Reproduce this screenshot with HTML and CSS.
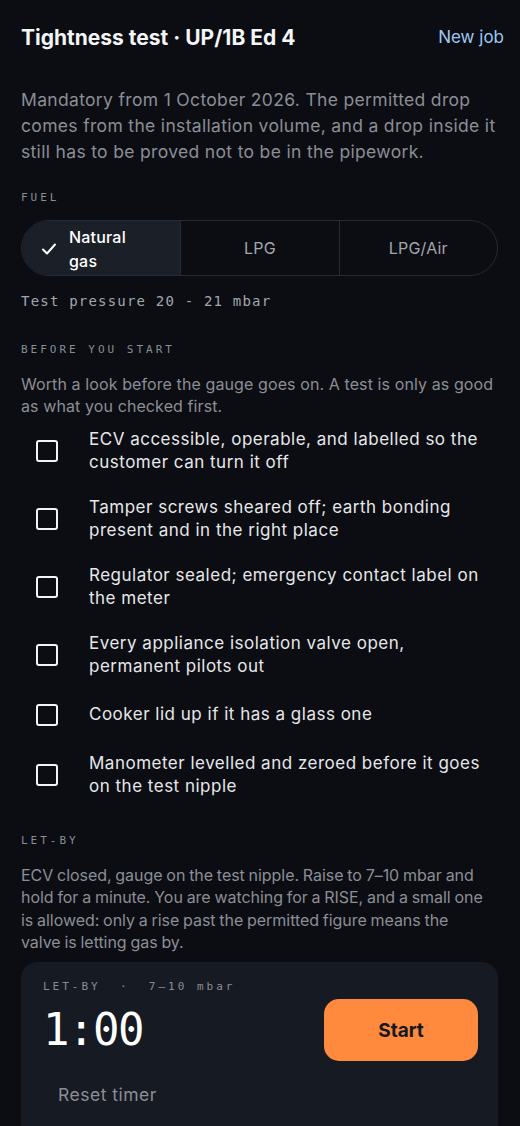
FILE: index.html
```html
<!DOCTYPE html>
<html lang="en">
<head>
<meta charset="utf-8">
<title>Tightness test</title>
<link rel="stylesheet" href="styles.css">
</head>
<body>
<main class="page">
  <header class="top">
    <h1 class="title">Tightness test · UP/1B Ed 4</h1>
    <a class="newjob" href="#">New job</a>
  </header>
  <p class="intro">Mandatory from 1 October 2026. The permitted drop comes from the installation volume, and a drop inside it still has to be proved not to be in the pipework.</p>

  <section class="sect">
    <div class="label">FUEL</div>
    <div class="seg">
      <button class="seg-item sel">
        <svg class="tick" width="18" height="18" viewBox="0 0 18 18"><path d="M3 9.5l4 4 8-9" fill="none" stroke="#fff" stroke-width="2" stroke-linecap="round" stroke-linejoin="round"/></svg>
        <span class="seg-text">Natural gas</span>
      </button>
      <button class="seg-item">LPG</button>
      <button class="seg-item">LPG/Air</button>
    </div>
    <div class="pressure">Test pressure 20 - 21 mbar</div>
  </section>

  <section class="sect">
    <div class="label">BEFORE YOU START</div>
    <p class="note">Worth a look before the gauge goes on. A test is only as good as what you checked first.</p>
    <ul class="checks">
      <li class="check"><span class="box"></span><span class="ctext">ECV accessible, operable, and labelled so the customer can turn it off</span></li>
      <li class="check"><span class="box"></span><span class="ctext">Tamper screws sheared off; earth bonding present and in the right place</span></li>
      <li class="check"><span class="box"></span><span class="ctext">Regulator sealed; emergency contact label on the meter</span></li>
      <li class="check"><span class="box"></span><span class="ctext">Every appliance isolation valve open, permanent pilots out</span></li>
      <li class="check"><span class="box"></span><span class="ctext">Cooker lid up if it has a glass one</span></li>
      <li class="check"><span class="box"></span><span class="ctext">Manometer levelled and zeroed before it goes on the test nipple</span></li>
    </ul>
  </section>

  <section class="sect last">
    <div class="label">LET-BY</div>
    <p class="note tight">ECV closed, gauge on the test nipple. Raise to 7–10 mbar and hold for a minute. You are watching for a RISE, and a small one is allowed: only a rise past the permitted figure means the <span class="keep">valve is letting gas by.</span></p>
    <div class="card">
      <div class="card-label">LET-BY &nbsp;·&nbsp; 7–10 mbar</div>
      <div class="timer-row">
        <div class="timer">1:00</div>
        <button class="start">Start</button>
      </div>
      <button class="reset">Reset timer</button>
    </div>
  </section>
</main>
</body>
</html>
```

FILE: styles.css
```css
* { box-sizing: border-box; }
html, body { margin: 0; padding: 0; }
body {
  background: #0b0d12;
  color: #e8e9ec;
  font-family: Inter, "Noto Sans", sans-serif;
}
.page {
  padding: 22px 22px 0 21px;
}
.top {
  display: flex;
  justify-content: space-between;
  align-items: center;
  height: 30px;
}
.title {
  margin: 0;
  font-size: 21px;
  font-weight: 700;
  letter-spacing: 0;
  color: #f4f5f7;
}
.newjob {
  color: #9fc6f2;
  text-decoration: none;
  font-size: 17px;
  margin-right: -6px;
}
.intro {
  margin: 35px 0 0;
  font-size: 17.5px;
  line-height: 26px;
  letter-spacing: 0.33px;
  color: #8b8e96;
}
.sect { margin-top: 26px; }
.sect + .sect { margin-top: 33px; }
.sect.last { margin-top: 29px; }
.label {
  font-family: "DejaVu Sans Mono", monospace;
  font-size: 11px;
  letter-spacing: 3px;
  color: #8a8d94;
  line-height: 14px;
}
.seg {
  margin-top: 15px;
  display: grid;
  grid-template-columns: repeat(3, 1fr);
  height: 56px;
  border: 1px solid #262a32;
  border-radius: 28px;
  overflow: hidden;
}
.seg-item {
  min-width: 0;
  display: flex;
  align-items: center;
  justify-content: center;
  gap: 11px;
  background: transparent;
  border: 0;
  border-left: 1px solid #262a32;
  color: #a3a6ad;
  font-family: inherit;
  font-size: 16px;
  letter-spacing: 0.2px;
  line-height: 24px;
  padding: 0 8px;
}
.seg-item:first-child { border-left: 0; }
.seg-item.sel {
  background: #1b1f27;
  color: #ffffff;
  font-weight: 500;
  justify-content: flex-start;
  padding: 2px 8px 0 18px;
  text-align: left;
}
.seg-text { max-width: 70px; }
.tick { flex: none; }
.pressure {
  margin-top: 16px;
  font-family: "DejaVu Sans Mono", monospace;
  font-size: 14px;
  letter-spacing: 1.2px;
  color: #a3a6ad;
  line-height: 18px;
}
.note {
  margin: 16px 0 0;
  font-size: 16px;
  line-height: 22.4px;
  letter-spacing: 0.1px;
  color: #8b8e96;
}
.note.tight {
  letter-spacing: -0.05px;
  word-spacing: -0.6px;
}
.keep { white-space: nowrap; }
.checks {
  list-style: none;
  margin: 3px 0 0;
  padding: 0;
}
.check {
  display: flex;
  align-items: center;
  gap: 31px;
  min-height: 44px;
  padding: 7px 0 7px 15px;
}
.check + .check { margin-top: 8px; }
.box {
  flex: none;
  width: 22px;
  height: 22px;
  border: 2px solid #f2f3f5;
  border-radius: 3px;
}
.ctext {
  font-size: 17px;
  line-height: 23px;
  letter-spacing: 0.5px;
  color: #e6e7ea;
}
.card {
  margin-top: 9px;
  background: #161a22;
  border-radius: 16px;
  padding: 18px 20px 20px 22px;
  min-height: 180px;
}
.card-label {
  font-family: "DejaVu Sans Mono", monospace;
  font-size: 11px;
  letter-spacing: 3px;
  color: #8a8d94;
  line-height: 14px;
}
.timer-row {
  display: flex;
  justify-content: space-between;
  align-items: center;
  margin-top: 5px;
}
.timer {
  font-family: "DejaVu Sans Mono", monospace;
  font-size: 44px;
  line-height: 52px;
  color: #ffffff;
  letter-spacing: -1.5px;
}
.start {
  width: 154px;
  height: 62px;
  background: #ff8a3d;
  border: 0;
  border-radius: 15px;
  color: #16181d;
  font-family: inherit;
  font-size: 19px;
  font-weight: 700;
}
.reset {
  margin-top: 22px;
  margin-left: 15px;
  background: transparent;
  border: 0;
  padding: 0;
  color: #8b8e96;
  font-family: inherit;
  font-size: 17.5px;
  letter-spacing: 0.5px;
  line-height: 24px;
}
```
